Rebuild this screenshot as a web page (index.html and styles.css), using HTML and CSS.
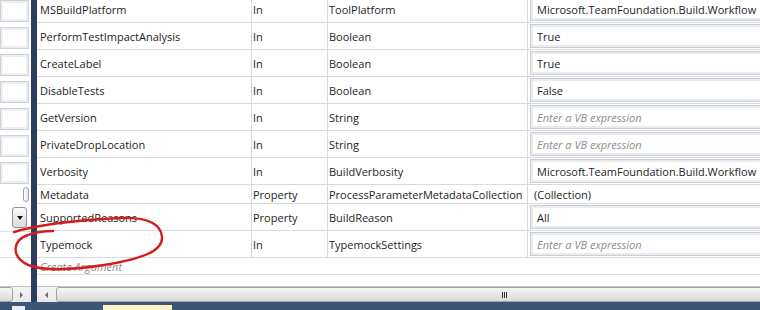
FILE: index.html
```html
<!DOCTYPE html>
<html lang="en">
<head>
    <meta charset="UTF-8">
    <title>Arguments</title>
    <link rel="stylesheet" href="styles.css">
</head>
<body>
    <div class="screen">
        <!-- cut-off panel on the left -->
        <div class="side">
            <div class="side-rows">
                <div class="side-row"><div class="side-box"></div></div>
                <div class="side-row"><div class="side-box"></div></div>
                <div class="side-row"><div class="side-box"></div></div>
                <div class="side-row"><div class="side-box"></div></div>
                <div class="side-row"><div class="side-box"></div></div>
                <div class="side-row"><div class="side-box"></div></div>
                <div class="side-row"><div class="side-box"></div></div>
                <div class="side-row short"><span class="pill"></span></div>
                <div class="side-row"><span class="drop-btn"><span class="tri-down"></span></span></div>
                <div class="side-row lined"></div>
            </div>
            <div class="hscroll side-scroll">
                <div class="thumb"></div>
                <span class="arrow-right"></span>
            </div>
        </div>

        <div class="splitter"></div>

        <div class="main">
            <div class="grid">
                <div class="cell name">MSBuildPlatform</div>
                <div class="cell">In</div>
                <div class="cell">ToolPlatform</div>
                <div class="cell value"><div class="expr">Microsoft.TeamFoundation.Build.Workflow</div></div>

                <div class="cell name">PerformTestImpactAnalysis</div>
                <div class="cell">In</div>
                <div class="cell">Boolean</div>
                <div class="cell value"><div class="expr">True</div></div>

                <div class="cell name">CreateLabel</div>
                <div class="cell">In</div>
                <div class="cell">Boolean</div>
                <div class="cell value"><div class="expr">True</div></div>

                <div class="cell name">DisableTests</div>
                <div class="cell">In</div>
                <div class="cell">Boolean</div>
                <div class="cell value"><div class="expr">False</div></div>

                <div class="cell name">GetVersion</div>
                <div class="cell">In</div>
                <div class="cell">String</div>
                <div class="cell value"><div class="expr empty">Enter a VB expression</div></div>

                <div class="cell name">PrivateDropLocation</div>
                <div class="cell">In</div>
                <div class="cell">String</div>
                <div class="cell value"><div class="expr empty">Enter a VB expression</div></div>

                <div class="cell name">Verbosity</div>
                <div class="cell">In</div>
                <div class="cell">BuildVerbosity</div>
                <div class="cell value"><div class="expr">Microsoft.TeamFoundation.Build.Workflow</div></div>

                <div class="cell name">Metadata</div>
                <div class="cell">Property</div>
                <div class="cell">ProcessParameterMetadataCollection</div>
                <div class="cell value plain">(Collection)</div>

                <div class="cell name">SupportedReasons</div>
                <div class="cell">Property</div>
                <div class="cell">BuildReason</div>
                <div class="cell value"><div class="expr">All</div></div>

                <div class="cell name">Typemock</div>
                <div class="cell">In</div>
                <div class="cell">TypemockSettings</div>
                <div class="cell value"><div class="expr empty">Enter a VB expression</div></div>
            </div>
            <div class="create-row">Create Argument</div>
            <div class="filler"></div>
            <div class="hscroll">
                <span class="arrow-left"></span>
                <div class="thumb wide"><span class="grip"></span></div>
            </div>
        </div>

        <svg class="scribble" width="200" height="80" viewBox="0 0 200 80">
            <path d="M14,32 C40,24 80,20 120,18 C150,17 161,25 162,37 C163,51 142,59 104,65 C72,70 36,72 23,62 C12,54 13,40 28,35 C36,32 44,31 53,31"
                  fill="none" stroke="#d41e1e" stroke-width="2.4" stroke-linecap="round"/>
        </svg>
    </div>

    <div class="statusbar">
        <span class="tab-white"></span>
        <span class="tab-yellow"></span>
    </div>
</body>
</html>
```

FILE: styles.css
```css
* {
    margin: 0;
    padding: 0;
    box-sizing: border-box;
}

body {
    width: 760px;
    height: 310px;
    overflow: hidden;
    background-color: #fff;
    color: #1e1e1e;
    font-family: "Open Sans", "Noto Sans", sans-serif;
    font-size: 11px;
}

.screen {
    position: relative;
    display: flex;
    height: 302px;
    overflow: hidden;
}

/* left panel */
.side {
    width: 31px;
    display: flex;
    flex-direction: column;
    overflow: hidden;
}

.side-rows {
    flex: 1;
    margin-top: -4px;
}

.side-row {
    height: 27px;
    display: flex;
    align-items: center;
    justify-content: flex-end;
    padding-right: 2px;
}

.side-row.short {
    height: 19px;
}

.side-row.lined {
    border-top: 1px solid #dcdfe3;
    border-bottom: 1px solid #dcdfe3;
}

.side-box {
    width: 33px;
    height: 22px;
    margin-top: 2px;
    border: 1px solid #cfd3d9;
    box-shadow: inset 0 0 0 2px #eceef1;
}

.pill {
    width: 6px;
    height: 15px;
    border: 1px solid #9a9ea4;
    border-radius: 3px;
    background: linear-gradient(to right, #fff, #e6e6e6);
}

.drop-btn {
    width: 15px;
    height: 21px;
    margin-right: 2px;
    border: 1px solid #8e9297;
    border-radius: 3px;
    background: linear-gradient(to bottom, #fafafa, #dcdcdc);
    display: flex;
    align-items: center;
    justify-content: center;
}

.tri-down {
    width: 0;
    height: 0;
    border-left: 3px solid transparent;
    border-right: 3px solid transparent;
    border-top: 4px solid #111;
}

.splitter {
    width: 6px;
    background-color: #2e3d5b;
}

/* argument grid */
.main {
    flex: 1;
    display: flex;
    flex-direction: column;
    overflow: hidden;
}

.grid {
    display: grid;
    grid-template-columns: 215px 76px 200px 1fr;
    grid-template-rows: repeat(7, 27px) 19px 27px 27px;
    margin-top: -4px;
}

.cell {
    display: flex;
    align-items: center;
    padding-left: 1px;
    border-right: 1px solid #d7dade;
    border-bottom: 1px solid #d7dade;
    white-space: nowrap;
    overflow: hidden;
}

.cell.name {
    padding-left: 3px;
}

.cell.value {
    border-right: none;
    padding-left: 2px;
}

.cell.plain {
    padding-left: 6px;
}

.expr {
    height: 24px;
    width: 260px;
    flex-shrink: 0;
    display: flex;
    align-items: center;
    padding-left: 6px;
    border: 1px solid #c9ced6;
    box-shadow: inset 0 0 0 2px #e9ecef;
    white-space: nowrap;
    overflow: hidden;
}

.expr.empty,
.create-row {
    color: #8c8c8c;
    font-style: italic;
}

.create-row {
    height: 17px;
    padding-left: 3px;
    display: flex;
    align-items: flex-end;
    border-bottom: 1px solid #d7dade;
}

.filler {
    flex: 1;
}

/* scrollbars */
.hscroll {
    height: 16px;
    display: flex;
    align-items: center;
    background: linear-gradient(to bottom, #f3f3f3, #e9e9e9);
    border-top: 1px solid #c4c4c4;
}

.thumb {
    height: 15px;
    border: 1px solid #a3a3a3;
    border-radius: 3px;
    background: linear-gradient(to bottom, #f6f6f6, #dadada);
}

.side-scroll .thumb {
    width: 17px;
    margin-left: -4px;
}

.thumb.wide {
    flex: 1;
    margin-right: -190px;
    display: flex;
    justify-content: center;
}

.grip {
    width: 5px;
    height: 6px;
    margin: auto 0 auto 2px;
    border-left: 1px solid #333;
    border-right: 1px solid #333;
    background: linear-gradient(to right, transparent 1px, #333 1px, #333 2px, transparent 2px);
}

.arrow-right {
    margin-left: 7px;
    width: 0;
    height: 0;
    border-top: 3px solid transparent;
    border-bottom: 3px solid transparent;
    border-left: 3px solid #6b6b6b;
}

.arrow-left {
    margin: 0 8px;
    width: 0;
    height: 0;
    border-top: 3px solid transparent;
    border-bottom: 3px solid transparent;
    border-right: 3px solid #6b6b6b;
}

.scribble {
    position: absolute;
    left: 0;
    top: 200px;
}

/* bottom bar */
.statusbar {
    height: 8px;
    background-color: #3f5576;
    display: flex;
    align-items: flex-end;
}

.tab-white {
    width: 13px;
    height: 4px;
    margin-left: 12px;
    background-color: #e8ecf2;
}

.tab-yellow {
    width: 69px;
    height: 5px;
    margin-left: 78px;
    background-color: #fdf1c4;
}
```
